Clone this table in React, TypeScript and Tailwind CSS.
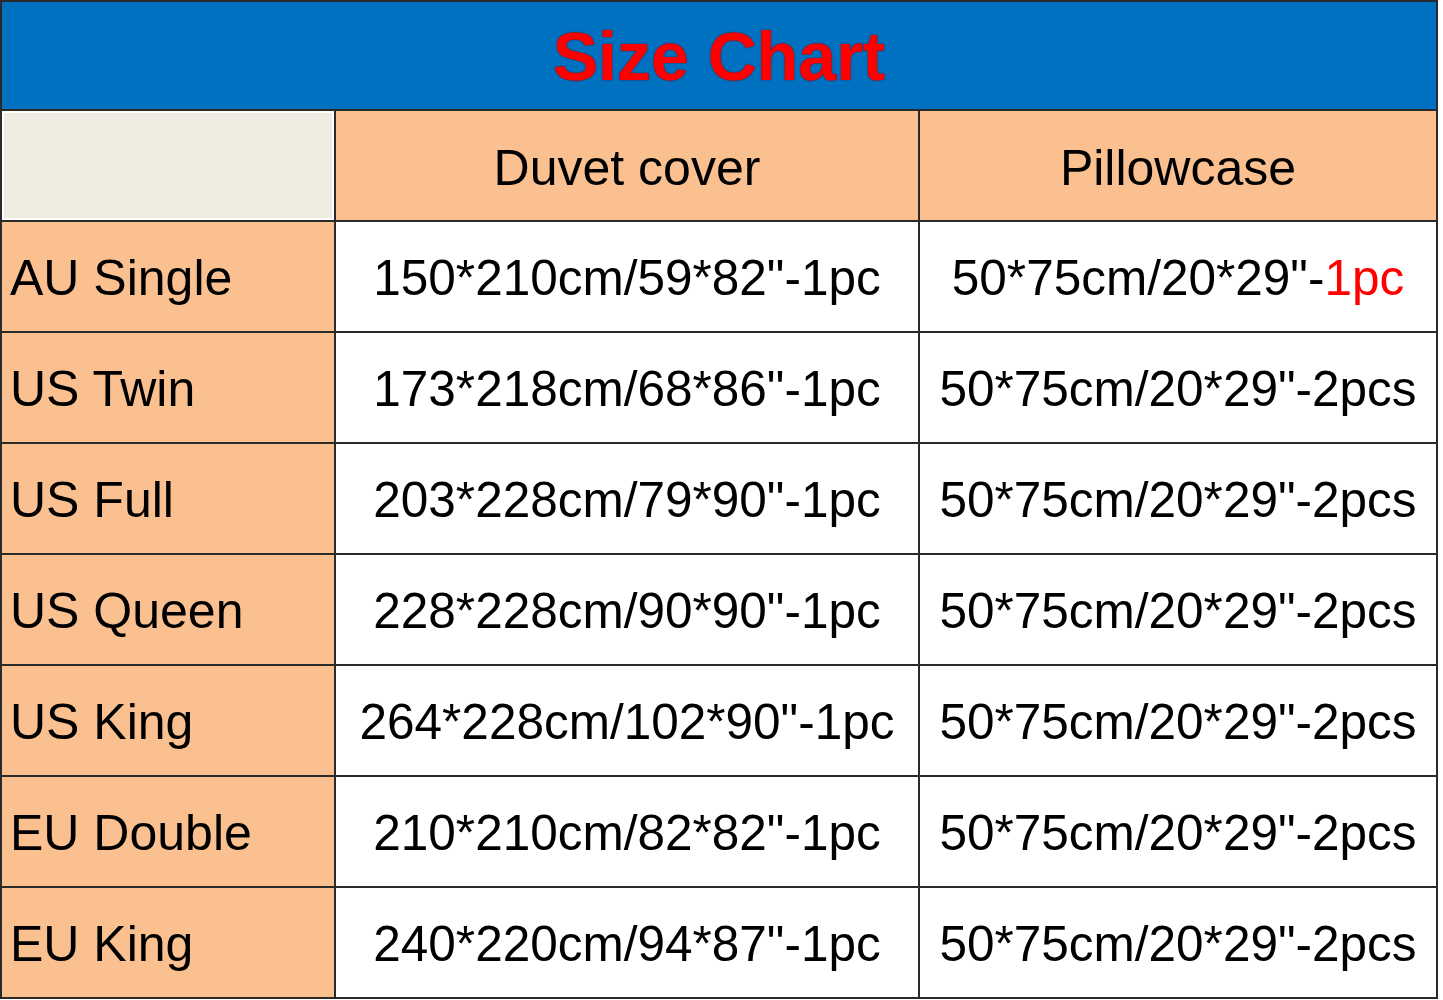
import React from "react";

const rows = [
  { name: "AU Single", duvet: '150*210cm/59*82"-1pc', pillow: '50*75cm/20*29"-', qty: "1pc", red: true },
  { name: "US Twin", duvet: '173*218cm/68*86"-1pc', pillow: '50*75cm/20*29"-', qty: "2pcs" },
  { name: "US Full", duvet: '203*228cm/79*90"-1pc', pillow: '50*75cm/20*29"-', qty: "2pcs" },
  { name: "US Queen", duvet: '228*228cm/90*90"-1pc', pillow: '50*75cm/20*29"-', qty: "2pcs" },
  { name: "US King", duvet: '264*228cm/102*90"-1pc', pillow: '50*75cm/20*29"-', qty: "2pcs" },
  { name: "EU Double", duvet: '210*210cm/82*82"-1pc', pillow: '50*75cm/20*29"-', qty: "2pcs" },
  { name: "EU King", duvet: '240*220cm/94*87"-1pc', pillow: '50*75cm/20*29"-', qty: "2pcs" },
];

export default function App() {
  return (
    <div className="w-[1443px] h-[1000px] bg-white font-['Liberation_Sans',Arial,sans-serif] text-black">
      <div className="w-[1438px] grid grid-cols-[332px_582px_516px] grid-rows-[107px_repeat(8,109px)] gap-[2px] p-[2px] bg-[#2a2a2a]">
        {/* title bar */}
        <div className="col-span-3 bg-[#0070c0] flex items-center justify-center">
          <h1 className="text-[68px] font-bold text-[#ff0000] leading-none [text-shadow:0_0_1.5px_#5a0000]">
            Size Chart
          </h1>
        </div>

        {/* column headers */}
        <div className="bg-[#eeece1] border-2 border-white"></div>
        <div className="bg-[#fac090] flex items-center justify-center text-[50px] pt-[6px]">Duvet cover</div>
        <div className="bg-[#fac090] flex items-center justify-center text-[50px] pt-[6px]">Pillowcase</div>

        {rows.map((r) => (
          <React.Fragment key={r.name}>
            <div className="bg-[#fac090] flex items-center pl-[8px] pt-[4px] text-[50px] whitespace-nowrap">{r.name}</div>
            <div className="bg-white flex items-center justify-center pt-[4px] text-[49.5px] whitespace-nowrap">{r.duvet}</div>
            <div className="bg-white flex items-center justify-center pt-[4px] text-[49.5px] whitespace-nowrap">
              {r.pillow}
              <span className={r.red ? "text-[#ff0000]" : ""}>{r.qty}</span>
            </div>
          </React.Fragment>
        ))}
      </div>
    </div>
  );
}
